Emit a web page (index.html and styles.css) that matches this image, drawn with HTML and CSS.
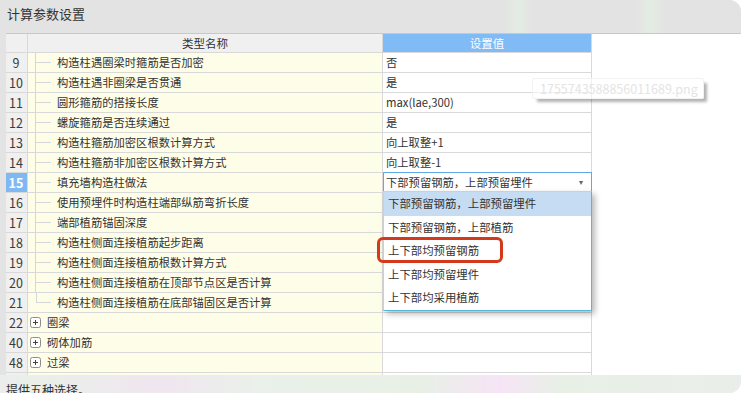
FILE: index.html
```html
<!DOCTYPE html>
<html lang="zh-CN">
<head>
    <meta charset="UTF-8">
    <meta name="viewport" content="width=device-width, initial-scale=1.0">
    <title>计算参数设置</title>
    <link rel="stylesheet" href="styles.css">
</head>
<body>
    <div class="window">
        <div class="titlebar">计算参数设置</div>

        <div class="main">
            <div class="grid">
                <div class="row head">
                    <div class="num"></div>
                    <div class="name">类型名称</div>
                    <div class="value">设置值</div>
                </div>

                <div class="row">
                    <div class="num">9</div>
                    <div class="name"><span class="branch"></span>构造柱遇圈梁时箍筋是否加密</div>
                    <div class="value">否</div>
                </div>
                <div class="row">
                    <div class="num">10</div>
                    <div class="name"><span class="branch"></span>构造柱遇非圈梁是否贯通</div>
                    <div class="value">是</div>
                </div>
                <div class="row">
                    <div class="num">11</div>
                    <div class="name"><span class="branch"></span>圆形箍筋的搭接长度</div>
                    <div class="value">max(lae,300)</div>
                </div>
                <div class="row">
                    <div class="num">12</div>
                    <div class="name"><span class="branch"></span>螺旋箍筋是否连续通过</div>
                    <div class="value">是</div>
                </div>
                <div class="row">
                    <div class="num">13</div>
                    <div class="name"><span class="branch"></span>构造柱箍筋加密区根数计算方式</div>
                    <div class="value">向上取整+1</div>
                </div>
                <div class="row">
                    <div class="num">14</div>
                    <div class="name"><span class="branch"></span>构造柱箍筋非加密区根数计算方式</div>
                    <div class="value">向上取整-1</div>
                </div>
                <div class="row">
                    <div class="num selected">15</div>
                    <div class="name"><span class="branch"></span>填充墙构造柱做法</div>
                    <div class="value editing">
                        <div class="combo">
                            <span>下部预留钢筋，上部预留埋件</span>
                            <span class="arrow">&#9662;</span>
                        </div>
                        <ul class="dropdown">
                            <li class="active">下部预留钢筋，上部预留埋件</li>
                            <li>下部预留钢筋，上部植筋</li>
                            <li>上下部均预留钢筋</li>
                            <li>上下部均预留埋件</li>
                            <li>上下部均采用植筋</li>
                            <div class="mark"></div>
                        </ul>
                    </div>
                </div>
                <div class="row">
                    <div class="num">16</div>
                    <div class="name"><span class="branch"></span>使用预埋件时构造柱端部纵筋弯折长度</div>
                    <div class="value"></div>
                </div>
                <div class="row">
                    <div class="num">17</div>
                    <div class="name"><span class="branch"></span>端部植筋锚固深度</div>
                    <div class="value"></div>
                </div>
                <div class="row">
                    <div class="num">18</div>
                    <div class="name"><span class="branch"></span>构造柱侧面连接植筋起步距离</div>
                    <div class="value"></div>
                </div>
                <div class="row">
                    <div class="num">19</div>
                    <div class="name"><span class="branch"></span>构造柱侧面连接植筋根数计算方式</div>
                    <div class="value"></div>
                </div>
                <div class="row">
                    <div class="num">20</div>
                    <div class="name"><span class="branch"></span>构造柱侧面连接植筋在顶部节点区是否计算</div>
                    <div class="value"></div>
                </div>
                <div class="row">
                    <div class="num">21</div>
                    <div class="name"><span class="branch last"></span>构造柱侧面连接植筋在底部锚固区是否计算</div>
                    <div class="value"></div>
                </div>

                <div class="row">
                    <div class="num">22</div>
                    <div class="name"><span class="expander"><svg width="11" height="11" viewBox="0 0 11 11"><rect x="0.5" y="0.5" width="10" height="10" rx="2" fill="#fff" stroke="#8c8c8c"/><path d="M3 5.5h5M5.5 3v5" stroke="#444" stroke-width="1"/></svg></span>圈梁</div>
                    <div class="value"></div>
                </div>
                <div class="row">
                    <div class="num">40</div>
                    <div class="name"><span class="expander"><svg width="11" height="11" viewBox="0 0 11 11"><rect x="0.5" y="0.5" width="10" height="10" rx="2" fill="#fff" stroke="#8c8c8c"/><path d="M3 5.5h5M5.5 3v5" stroke="#444" stroke-width="1"/></svg></span>砌体加筋</div>
                    <div class="value"></div>
                </div>
                <div class="row">
                    <div class="num">48</div>
                    <div class="name"><span class="expander"><svg width="11" height="11" viewBox="0 0 11 11"><rect x="0.5" y="0.5" width="10" height="10" rx="2" fill="#fff" stroke="#8c8c8c"/><path d="M3 5.5h5M5.5 3v5" stroke="#444" stroke-width="1"/></svg></span>过梁</div>
                    <div class="value"></div>
                </div>
                <div class="row">
                    <div class="num"></div>
                    <div class="name"><span class="expander"><svg width="11" height="11" viewBox="0 0 11 11"><rect x="0.5" y="0.5" width="10" height="10" rx="2" fill="#fff" stroke="#8c8c8c"/><path d="M3 5.5h5M5.5 3v5" stroke="#444" stroke-width="1"/></svg></span></div>
                    <div class="value"></div>
                </div>
            </div>

            <div class="ghost">1755743588856011689.png</div>
        </div>

        <div class="statusbar">提供五种选择。</div>
    </div>
</body>
</html>
```

FILE: styles.css
```css
html, body {
    margin: 0;
    padding: 0;
    background: #fff;
}
body {
    width: 741px;
    height: 393px;
    overflow: hidden;
    font-family: "Noto Sans CJK SC", "Noto Sans", sans-serif;
    color: #333;
}
.window {
    height: 393px;
    display: flex;
    flex-direction: column;
    background: #e3e3e3;
    border-radius: 0 12px 12px 0;
    overflow: hidden;
}
.titlebar {
    height: 33px;
    flex: none;
    box-sizing: border-box;
    padding: 5px 0 0 7px;
    font-size: 13px;
    line-height: 18px;
    color: #333;
    background: linear-gradient(90deg, #e3e3e3 0, #e3e3e3 505px, #e3ede2 518px, #e3e3e3 532px, #e3e3e3 635px, #e3ede2 650px, #e3e3e3 665px);
}
.main {
    flex: 1;
    position: relative;
    margin-left: 6px;
    background: #fff;
    border-top: 1px solid #c8c8c8;
    overflow: hidden;
}
.grid {
    width: 586px;
}
.row {
    display: grid;
    grid-template-columns: 22px 355px 209px;
    height: 20px;
    box-sizing: border-box;
    border-bottom: 1px solid #d9d9d9;
    font-size: 11.3px;
    line-height: 19px;
}
.row > div {
    box-sizing: border-box;
    border-right: 1px solid #d9d9d9;
    white-space: nowrap;
    overflow: hidden;
}
.row .num {
    background: #f0f0f0;
    text-align: center;
    font-size: 12.5px;
    color: #3a3a3a;
    padding-right: 1px;
}
.row .num.selected {
    background: #7fb9f3;
    color: #fff;
    font-weight: bold;
}
.row .name {
    background: #fefde7;
    display: flex;
    align-items: stretch;
}
.row .value {
    background: #fff;
    padding-left: 3px;
}
.row.head {
    height: 19px;
    line-height: 18px;
    font-size: 11.5px;
}
.row.head .name {
    background: #f0f0f0;
    justify-content: center;
}
.row.head .value {
    background: #80bbf5;
    color: #fff;
    text-align: center;
    padding-left: 0;
}

/* tree connectors */
.branch {
    width: 15px;
    margin-left: 7px;
    margin-right: 6px;
    flex: none;
    border-left: 1px solid #d6d6d6;
    background: linear-gradient(#d6d6d6, #d6d6d6) no-repeat left center / 15px 1px;
}
.branch.last {
    border-left: none;
    margin-left: 8px;
    background:
        linear-gradient(#d6d6d6, #d6d6d6) no-repeat left top / 1px 50%,
        linear-gradient(#d6d6d6, #d6d6d6) no-repeat left center / 15px 1px;
}
.expander {
    display: flex;
    align-items: center;
    margin-left: 2px;
    margin-right: 6px;
}
.expander svg {
    display: block;
}

/* combo box in edit mode */
.row .value.editing {
    overflow: visible;
    position: relative;
    padding-left: 0;
    border-right: none;
}
.combo {
    margin-top: -1px;
    height: 20px;
    box-sizing: border-box;
    border: 1px solid #5fa9e6;
    display: flex;
    justify-content: space-between;
    padding: 0 8px 0 2px;
    line-height: 18px;
    background: #fff;
}
.combo .arrow {
    font-size: 8px;
    color: #666;
}
.dropdown {
    position: absolute;
    top: 18px;
    left: 0;
    width: 209px;
    box-sizing: border-box;
    margin: 0;
    padding: 0;
    list-style: none;
    background: #fff;
    border: 1px solid #b9d5ea;
    border-bottom-color: #5ab4d8;
    border-right-color: #5ab4d8;
    box-shadow: 3px 3px 6px rgba(0, 0, 0, 0.28);
    z-index: 2;
}
.dropdown li {
    height: 23.5px;
    line-height: 23.5px;
    padding-left: 4px;
    font-size: 11.4px;
    color: #333;
}
.dropdown li.active {
    background: #c5dcf2;
}
.mark {
    position: absolute;
    left: -7px;
    top: 45px;
    width: 126px;
    height: 26px;
    box-sizing: border-box;
    border: 3px solid #d33a1b;
    border-radius: 6px;
}

/* drag ghost */
.ghost {
    position: absolute;
    left: 526px;
    top: 44px;
    width: 172px;
    height: 21px;
    box-sizing: border-box;
    padding-left: 7px;
    font-size: 12.5px;
    line-height: 20px;
    color: #e4e4e4;
    background: rgba(255, 255, 255, 0.55);
    border: 1px solid #f2f2f2;
    border-radius: 2px;
    box-shadow: 4px 4px 3px -1px rgba(0, 0, 0, 0.3);
}

.statusbar {
    height: 18px;
    flex: none;
    box-sizing: border-box;
    padding: 6px 0 0 6px;
    font-size: 12px;
    line-height: 18px;
    color: #333;
    background: linear-gradient(90deg, #ececec 0, #e9f0e8 30px, #f0e6f0 160px, #eaf0ea 260px, #e8f0e6 420px, #f6e4f6 500px, #e8f0e6 560px, #eaeeea 741px);
}
```
